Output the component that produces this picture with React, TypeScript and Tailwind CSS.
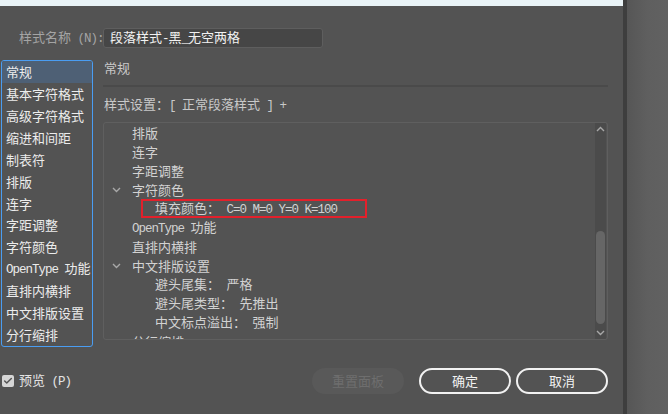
import { Check } from "lucide-react";

const categories = [
  "常规",
  "基本字符格式",
  "高级字符格式",
  "缩进和间距",
  "制表符",
  "排版",
  "连字",
  "字距调整",
  "字符颜色",
  "OpenType 功能",
  "直排内横排",
  "中文排版设置",
  "分行缩排",
];

type Row = { text: string; level: 0 | 1; open?: boolean; marked?: boolean };

const rows: Row[] = [
  { text: "排版", level: 0 },
  { text: "连字", level: 0 },
  { text: "字距调整", level: 0 },
  { text: "字符颜色", level: 0, open: true },
  { text: "填充颜色： C=0 M=0 Y=0 K=100", level: 1, marked: true },
  { text: "OpenType 功能", level: 0 },
  { text: "直排内横排", level: 0 },
  { text: "中文排版设置", level: 0, open: true },
  { text: "避头尾集： 严格", level: 1 },
  { text: "避头尾类型： 先推出", level: 1 },
  { text: "中文标点溢出： 强制", level: 1 },
  { text: "分行缩排", level: 0 },
];

// latin runs are half-width monospace like the dialog's font, CJK stays full width
const Txt = ({ children }: { children: string }) => (
  <span className="whitespace-pre">
    {children.split(/([\x20-\x7E]+)/).map((part, i) =>
      /^[\x20-\x7E]+$/.test(part) ? (
        <span key={i} className="font-['Liberation_Mono',monospace] text-[12.5px] tracking-[-1px]">
          {part}
        </span>
      ) : (
        <span key={i}>{part}</span>
      )
    )}
  </span>
);

const Chevron = ({ up }: { up?: boolean }) => (
  <svg width="9" height="6" viewBox="0 0 9 6" className="shrink-0">
    <path
      d={up ? "M1 5 L4.5 1.5 L8 5" : "M1 1 L4.5 4.5 L8 1"}
      fill="none"
      stroke="#a8a8a8"
      strokeWidth="1.4"
    />
  </svg>
);

const TreeRow = ({ row }: { row: Row }) => {
  if (row.marked) {
    return (
      <div className="h-[19px] flex items-center">
        <div className="ml-[37px] w-[226px] h-[19px] border-2 border-[#e3202b] flex items-center pl-[12px]">
          <Txt>{row.text}</Txt>
        </div>
      </div>
    );
  }
  return (
    <div className="h-[19px] flex items-center">
      <div className="w-[28px] flex pl-[8px]">{row.open && <Chevron />}</div>
      <div className={row.level === 1 ? "pl-[23px]" : ""}>
        <Txt>{row.text}</Txt>
      </div>
    </div>
  );
};

export default function App() {
  return (
    <div className="w-[668px] h-[414px] bg-[#535353] flex overflow-hidden text-[13px] font-['Noto_Sans_CJK_SC','Noto_Sans',sans-serif]">
      <div className="w-[623px] flex flex-col">
        <div className="h-[6px] bg-[#e9f3f6]" />

        <div className="flex items-center mt-[22px] h-[20px]">
          <span className="ml-[19px] w-[84px] text-[#a4a4a4]">
            <Txt>样式名称 (N):</Txt>
          </span>
          <div className="w-[220px] h-[20px] rounded-[3px] bg-[#464646] border border-[#5e5e5e] flex items-center pl-[6px] text-[#f2f2f2]">
            <Txt>段落样式-黑_无空两格</Txt>
          </div>
        </div>

        <div className="flex mt-[12px]">
          <div className="ml-[1px] w-[92px] h-[287px] border border-[#4a9df2] rounded-[3px] overflow-hidden text-[#ececec]">
            {categories.map((c, i) => (
              <div
                key={c}
                className={`h-[21.9px] flex items-center pl-[4px] whitespace-nowrap ${
                  i === 0 ? "bg-[#4e6075]" : ""
                }`}
              >
                <Txt>{c}</Txt>
              </div>
            ))}
          </div>

          <div className="ml-[10px] w-[505px] flex flex-col text-[#c9c9c9]">
            <div className="h-[18px] flex items-center pl-[1px] -mt-px">常规</div>
            <div className="mt-[8px] h-[2px] bg-[#4a4a4a]" />
            <div className="mt-[9px] h-[18px] flex items-center pl-[1px]">
              <Txt>样式设置：[ 正常段落样式 ] +</Txt>
            </div>
            <div className="mt-[8px] h-[218px] border border-[#5f5f5f] rounded-[3px] flex overflow-hidden">
              <div className="flex-1 flex flex-col text-[#d2d2d2] whitespace-nowrap">
                {rows.map((r) => (
                  <TreeRow key={r.text} row={r} />
                ))}
              </div>
              <div className="w-[11px] mr-[1px] bg-[#4b4b4b] flex flex-col items-center py-[1px]">
                <div className="h-[10px] flex items-center">
                  <Chevron up />
                </div>
                <div className="flex-1 w-full relative">
                  <div className="absolute left-px right-px top-[97px] bottom-[4px] rounded-full bg-[#666666]" />
                </div>
                <div className="h-[10px] flex items-center">
                  <Chevron />
                </div>
              </div>
            </div>
          </div>
        </div>

        <div className="flex items-center mt-[21px] h-[26px]">
          <div className="ml-[2px] w-[12px] h-[12px] rounded-[2px] bg-[#d6d6d6] flex items-center justify-center">
            <Check size={10} strokeWidth={3.5} color="#555555" />
          </div>
          <span className="ml-[5px] text-[#e4e4e4]">
            <Txt>预览 (P)</Txt>
          </span>
          <div className="ml-auto flex gap-[5px] mr-[15px]">
            <div className="w-[92px] h-[26px] rounded-full bg-[#595959] text-[#6e6e6e] flex items-center justify-center mr-[10px]">
              重置面板
            </div>
            <div className="w-[92px] h-[26px] rounded-full border-2 border-[#f2f2f2] text-[#f2f2f2] flex items-center justify-center">
              确定
            </div>
            <div className="w-[92px] h-[26px] rounded-full border-2 border-[#f2f2f2] text-[#f2f2f2] flex items-center justify-center">
              取消
            </div>
          </div>
        </div>
      </div>

      <div className="flex-1 flex">
        <div className="w-[4px] bg-[#3e3e3e]" />
        <div className="flex-1 bg-gradient-to-r from-[#565656] via-[#5f5f5f] to-[#616161]" />
      </div>
    </div>
  );
}
